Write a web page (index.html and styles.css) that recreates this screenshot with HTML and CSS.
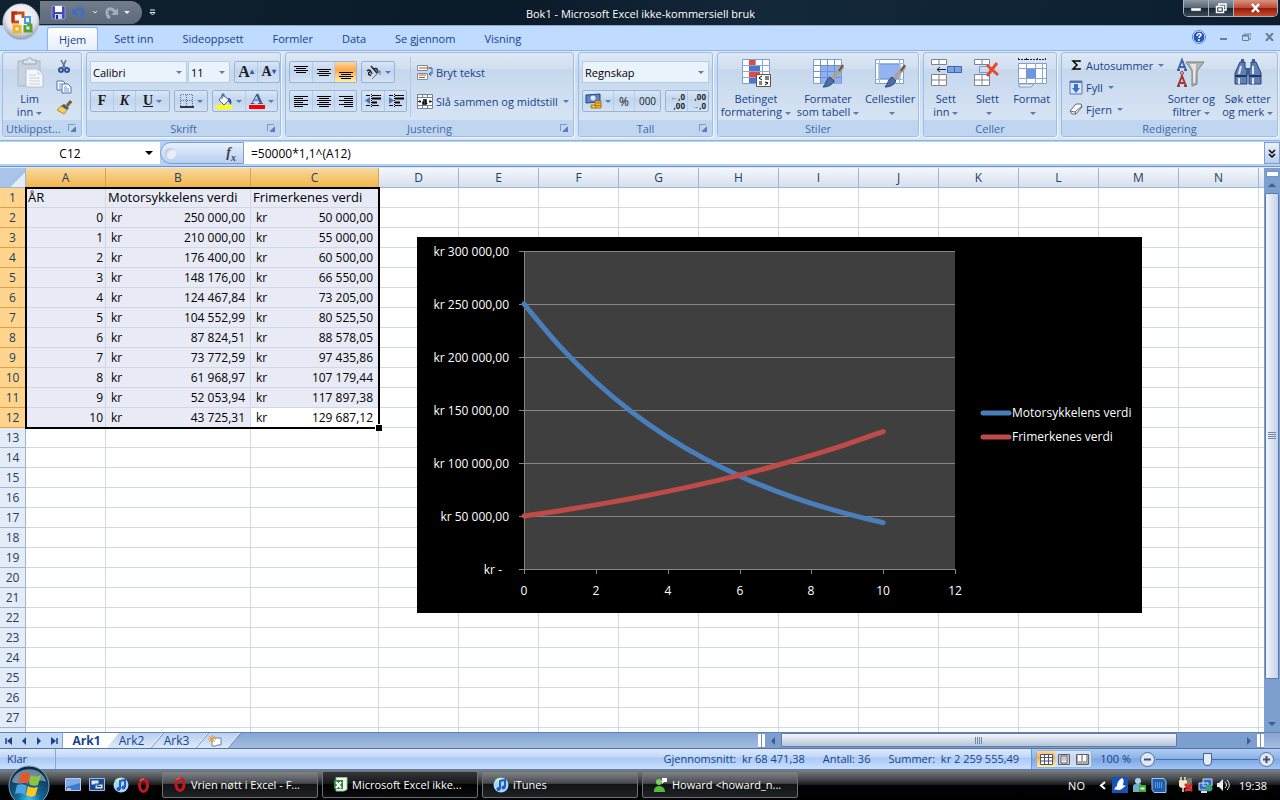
FILE: index.html
```html
<!DOCTYPE html>
<html lang="no">

<head>
    <meta charset="UTF-8">
    <meta name="viewport" content="width=device-width, initial-scale=1.0">
    <title>Bok1 - Microsoft Excel ikke-kommersiell bruk</title>
    <link rel="stylesheet" href="styles.css">
</head>

<body>
    <header class="titlebar">
        <button class="office" aria-label="Office">
            <svg width="38" height="38" viewBox="0 0 38 38">
                <defs>
                    <radialGradient id="orb" cx=".5" cy=".35" r=".65"><stop offset="0" stop-color="#fff"/><stop offset=".65" stop-color="#e3e7ee"/><stop offset="1" stop-color="#8d98ab"/></radialGradient>
                </defs>
                <circle cx="19" cy="19" r="18" fill="url(#orb)" stroke="#c6ccd6"/>
                <g fill="none" stroke-width="3">
                    <path d="M17 19h-6v-9h10v5" stroke="#d9480f"/>
                    <path d="M22 14h6v6h-5v-6" stroke="#4b9be0" stroke-width="2"/>
                    <path d="M18 22v7h-6v-6h6" stroke="#f0b323"/>
                    <path d="M23 22v6h6v-6h-4" stroke="#5aa02c"/>
                    <path d="M11 19v-9h4" stroke="#b5300b"/>
                </g>
            </svg>
        </button>
        <div class="quick">
            <button aria-label="Lagre"><svg width="15" height="15" viewBox="0 0 15 15"><path d="M1 1h12l1 1v12H1z" fill="#4349b5" stroke="#8c92e0"/><path d="M4 1h7v6H4z" fill="#fff"/><path d="M4 9h7v5H4z" fill="#c9d4f0"/><path d="M5 10h2v4H5z" fill="#272c7c"/></svg></button>
            <button aria-label="Angre"><svg width="14" height="13" viewBox="0 0 14 13"><path d="M3 6C6 1 12 2 11 7c0 2-1 4-3 5" fill="none" stroke="#3f6fc4" stroke-width="3"/><path d="M0 2v7h7z" fill="#3f6fc4"/></svg></button>
            <svg width="6" height="5" viewBox="0 0 6 5"><path d="M1 1l2 2 2-2" fill="none" stroke="#e7ecf4"/></svg>
            <button aria-label="Gjenta"><svg width="14" height="13" viewBox="0 0 14 13"><path d="M11 6C8 1 2 2 3 7c0 2 1 4 3 5" fill="none" stroke="#a4adba" stroke-width="3"/><path d="M14 2v7H7z" fill="#a4adba"/></svg></button>
            <svg width="6" height="5" viewBox="0 0 6 5"><path d="M0 1h6L3 4z" fill="#e7ecf4"/></svg>
        </div>
        <button class="customize" aria-label="Tilpass"><svg width="7" height="8" viewBox="0 0 7 8"><path d="M1 1h5M1 3.500h5L3.500 6z" fill="none" stroke="#e7ecf4"/></svg></button>
        <h1>Bok1 - Microsoft Excel ikke-kommersiell bruk</h1>
        <div class="window-buttons">
            <button aria-label="Minimer"><svg width="12" height="10" viewBox="0 0 12 10"><path d="M1 5h10v3H1z" fill="#fff" stroke="#555" stroke-width=".5"/></svg></button>
            <button aria-label="Gjenopprett"><svg width="12" height="11" viewBox="0 0 12 11"><path d="M4 3V1h7v6H9M1.500 3.500h7v6h-7zM4 6h2v1H4z" fill="none" stroke="#fff" stroke-width="1.500"/></svg></button>
            <button class="close" aria-label="Lukk"><svg width="11" height="10" viewBox="0 0 11 10"><path d="M2 1l7 8M9 1L2 9" stroke="#fff" stroke-width="2.500"/></svg></button>
        </div>
    </header>

    <nav class="tabs">
        <button class="act">Hjem</button>
        <button>Sett inn</button>
        <button>Sideoppsett</button>
        <button>Formler</button>
        <button>Data</button>
        <button>Se gjennom</button>
        <button>Visning</button>
        <div class="doc-buttons">
            <button aria-label="Hjelp"><svg width="14" height="14" viewBox="0 0 14 14"><circle cx="7" cy="7" r="6" fill="#2358c4" stroke="#fff"/><circle cx="7" cy="7" r="6.500" fill="none" stroke="#5b84cc"/><path d="M5 6c0-3 4-3 4-1 0 1-2 1-2 3M7 9v2" fill="none" stroke="#fff" stroke-width="1.500"/></svg></button>
            <button aria-label="Minimer vindu"><svg width="8" height="8" viewBox="0 0 8 8"><path d="M0 5h7v2H0z" fill="#6f7c8e"/></svg></button>
            <button aria-label="Gjenopprett vindu"><svg width="9" height="8" viewBox="0 0 9 8"><path d="M2 2V1h7v5H7M.500 2.500h6v5h-6zM0 3h7" fill="none" stroke="#6f7c8e"/></svg></button>
            <button aria-label="Lukk vindu"><svg width="9" height="8" viewBox="0 0 9 8"><path d="M1 0l7 8M8 0L1 8" stroke="#6f7c8e" stroke-width="2"/></svg></button>
        </div>
    </nav>

    <section class="ribbon">
        <div class="group clipboard">
            <div class="tools">
                <button class="big">
                    <svg width="30" height="32" viewBox="0 0 30 32"><path d="M3 4h22v25H3z" fill="#c8d2df" stroke="#a9b7c9"/><path d="M8 3h4c0-3 5-3 5 0h4v4H8z" fill="#dde4ec" stroke="#97a6b9"/><path d="M11 12h12l5 5v13H11z" fill="#f4f7fb" stroke="#b4c1d4"/><path d="M23 12v5h5M14 18h7M14 21h11M14 24h11M14 27h11" fill="none" stroke="#c7d3e4"/></svg>
                    <span>Lim<br>inn<i class="caret"></i></span>
                </button>
                <div class="stack">
                    <button aria-label="Klipp ut"><svg width="14" height="15" viewBox="0 0 14 15"><path d="M4 1l5 9M9 1L5 10" stroke="#5c6f8d" stroke-width="1.500"/><circle cx="4" cy="11" r="2" fill="none" stroke="#2d55a4" stroke-width="2"/><circle cx="10" cy="11" r="2" fill="none" stroke="#2d55a4" stroke-width="2"/></svg></button>
                    <button aria-label="Kopier"><svg width="16" height="14" viewBox="0 0 16 14"><path d="M1 1h6l2 2v7H1z" fill="#fff" stroke="#4d6fb0"/><path d="M6 4h6l3 3v6H6z" fill="#fff" stroke="#4d6fb0"/><path d="M3 4h3M3 6h2M3 8h2M8 7h3M8 9h5M8 11h5" stroke="#6c93d2"/></svg></button>
                    <button aria-label="Kopier format"><svg width="16" height="15" viewBox="0 0 16 15"><path d="M15 1l-4 5" stroke="#7b6138" stroke-width="3"/><path d="M8 4l5 4-2 2-6-4z" fill="#4d5566"/><path d="M5 6l6 4-3 4-7-4z" fill="#efce6c" stroke="#b78d2c"/></svg></button>
                </div>
            </div>
            <footer>Utklippst...<i class="launch"></i></footer>
        </div>

        <div class="group font">
            <div class="tools rows">
                <div class="row">
                    <div class="pair">
                        <select class="family" aria-label="Skrift"><option>Calibri</option></select>
                        <select class="size" aria-label="Skriftstørrelse"><option>11</option></select>
                    </div>
                    <div class="set push">
                        <button class="serif large" aria-label="Forstørr skrift">A<sup>▴</sup></button>
                        <button class="serif" aria-label="Forminsk skrift">A<sup>▾</sup></button>
                    </div>
                </div>
                <div class="row">
                    <div class="set format">
                        <button class="serif">F</button>
                        <button class="serif"><em>K</em></button>
                        <button class="serif wide"><u>U</u><i class="caret"></i></button>
                    </div>
                    <div class="set">
                        <button class="wide" aria-label="Kantlinjer"><svg width="14" height="14" viewBox="0 0 14 14"><path d="M1 .500h12M1 6.500h12M.500 1v12M6.500 1v12M12.500 1v12" stroke="#5d7399" stroke-dasharray="1 1"/><path d="M0 13h14" stroke="#000" stroke-width="1.500"/></svg><i class="caret"></i></button>
                    </div>
                    <div class="set push">
                        <button class="wide" aria-label="Fyllfarge"><svg width="17" height="16" viewBox="0 0 17 16"><path d="M0 12h16v4H0z" fill="#ff0"/><path d="M7 2l6 5-5 5-5-5z" fill="#f4f7fc" stroke="#44608f"/><path d="M6 6V1h2v3" fill="none" stroke="#44608f"/><path d="M12 5c3 0 4 3 3 7l-3-4z" fill="#2b56a8"/></svg><i class="caret"></i></button>
                        <button class="wide" aria-label="Skriftfarge"><svg width="16" height="16" viewBox="0 0 16 16"><path d="M0 12h16v4H0z" fill="red"/><path d="M3 10l5-9M5 7h5M1.500 10.500h4M9 10.500h5" fill="none" stroke="#3d5c93"/><path d="M8 1l4 9" stroke="#3d5c93" stroke-width="2.500"/></svg><i class="caret"></i></button>
                    </div>
                </div>
            </div>
            <footer>Skrift<i class="launch"></i></footer>
        </div>

        <div class="group align">
            <div class="tools">
                <div class="rows">
                    <div class="row">
                        <div class="set">
                            <button aria-label="Toppjuster"><svg width="14" height="14" viewBox="0 0 14 14"><path d="M0 1.500h14M2 3.500h10M0 5.500h14M2 7.500h10" stroke="#000"/></svg></button>
                            <button aria-label="Midtjuster"><svg width="14" height="14" viewBox="0 0 14 14"><path d="M0 4.500h14M2 6.500h10M0 8.500h14M2 10.500h10" stroke="#000"/></svg></button>
                            <button class="on" aria-label="Bunnjuster"><svg width="14" height="14" viewBox="0 0 14 14"><path d="M0 7.500h14M2 9.500h10M0 11.500h14M2 13.500h10" stroke="#000"/></svg></button>
                        </div>
                        <div class="set">
                            <button class="wide" aria-label="Retning"><svg width="16" height="15" viewBox="0 0 16 15"><path d="M1 6c2-2 3-1 4 1l1 2M4 7c-2 0-2 4 1 3M5 1l6 7M8 4c3-2 5 2 2 4" fill="none" stroke="#222" stroke-width="1.500"/><path d="M6 14l8-8M14 10V6h-4" fill="none" stroke="#5c6f8d"/></svg><i class="caret"></i></button>
                        </div>
                    </div>
                    <div class="row">
                        <div class="set">
                            <button aria-label="Venstrejuster"><svg width="14" height="13" viewBox="0 0 14 13"><path d="M0 1.500h14M0 3.500h9M0 5.500h14M0 7.500h9M0 9.500h14M0 11.500h9" stroke="#000"/></svg></button>
                            <button aria-label="Midtstill"><svg width="14" height="13" viewBox="0 0 14 13"><path d="M0 1.500h14M2 3.500h10M0 5.500h14M2 7.500h10M0 9.500h14M2 11.500h10" stroke="#000"/></svg></button>
                            <button aria-label="Høyrejuster"><svg width="14" height="13" viewBox="0 0 14 13"><path d="M0 1.500h14M5 3.500h9M0 5.500h14M5 7.500h9M0 9.500h14M5 11.500h9" stroke="#000"/></svg></button>
                        </div>
                        <div class="set">
                            <button aria-label="Reduser innrykk"><svg width="16" height="14" viewBox="0 0 16 14"><path d="M1 1.500h4M7 1.500h9M1 11.500h4M7 11.500h7" stroke="#000"/><path d="M7 4.500h9M7 8.500h5" stroke="#000" stroke-width="2"/><path d="M6.500 0v14" stroke="#000" stroke-dasharray="1 1"/><path d="M5 3v7L0 6.500z" fill="#4a70b5"/></svg></button>
                            <button aria-label="Øk innrykk"><svg width="16" height="14" viewBox="0 0 16 14"><path d="M1 1.500h4M7 1.500h9M1 11.500h4M7 11.500h7" stroke="#000"/><path d="M7 4.500h9M7 8.500h5" stroke="#000" stroke-width="2"/><path d="M6.500 0v14" stroke="#000" stroke-dasharray="1 1"/><path d="M1 3v7l5-3.500z" fill="#4a70b5"/></svg></button>
                        </div>
                    </div>
                </div>
                <div class="rows wrap">
                    <button class="text"><svg width="16" height="15" viewBox="0 0 16 15"><path d="M.500.500h10v5H.500zM.500 8.500h10v6H.500z" fill="#fff" stroke="#7d8ba3"/><path d="M2 3h12M2 10h7M2 12.500h6" stroke="#c05a1f"/><path d="M12 3h3v6h-3M14 7l-2 2 2 2" fill="none" stroke="#3b62a8"/></svg>Bryt tekst</button>
                    <button class="text"><svg width="16" height="15" viewBox="0 0 16 15"><path d="M.500.500h15v14H.500zM5.500 0v4M10.500 0v4M5.500 11v4M10.500 11v4M0 3.500h16M0 11.500h16" fill="#fff" stroke="#6d7f9c"/><path d="M1 7.500h3M12 7.500h3M3 6v3M13 6v3" stroke="#222"/><path d="M6 6h3v4H6V8h3M9 9l1 1" fill="none" stroke="#000" stroke-width="1.500"/></svg>Slå sammen og midtstill<i class="caret"></i></button>
                </div>
            </div>
            <footer>Justering<i class="launch"></i></footer>
        </div>

        <div class="group number">
            <div class="tools rows">
                <select aria-label="Tallformat"><option>Regnskap</option></select>
                <div class="row">
                    <div class="set">
                        <button class="wide" aria-label="Valuta"><svg width="17" height="16" viewBox="0 0 17 16"><path d="M1 2l14-1v8L1 10z" fill="#5b84c8" stroke="#27467e"/><circle cx="8" cy="5" r="2.500" fill="#dfe9f8"/><path d="M10 8h6v7h-6z" fill="#f1bd3b" stroke="#a97812"/><path d="M6 12h5v3H6zM10 10h6M10 12.500h6" fill="#f1bd3b" stroke="#a97812"/></svg><i class="caret"></i></button>
                        <button class="percent">%</button>
                        <button class="zeros">000</button>
                    </div>
                    <div class="set push decimals">
                        <button><span>←<b>,0</b></span><b>,00</b></button>
                        <button><b>,00</b><span>→<b>,0</b></span></button>
                    </div>
                </div>
            </div>
            <footer>Tall<i class="launch"></i></footer>
        </div>

        <div class="group styles">
            <div class="tools">
                <button class="big">
                    <svg width="30" height="30" viewBox="0 0 30 30"><path d="M1.500 1.500h27v24h-27z" fill="#fff" stroke="#7f9dcd"/><path d="M1 7.500h28M1 13.500h28M1 19.500h28M8.500 1v25M14.500 1v25M21.500 1v25" stroke="#8ba8d5"/><path d="M8 2h6v5H8zM8 14h11v5H8z" fill="#e8473f"/><path d="M8 8h11v5H8zM8 20h8v5H8z" fill="#4a76cf"/><path d="M15.500 16.500h14v12h-14z" fill="#fff" stroke="#555"/><path d="M21 18l-3 2 3 2M18 24h3M18 26h3M24 19h4M24 21h4M24 24l3 1-3 2" fill="none" stroke="#000"/></svg>
                    <span>Betinget<br>formatering<i class="caret"></i></span>
                </button>
                <button class="big">
                    <svg width="32" height="30" viewBox="0 0 32 30"><path d="M1.500 1.500h28v24h-28z" fill="#fff" stroke="#7f9dcd"/><path d="M9 8h20v18H9z" fill="#8fb0ec"/><path d="M1 7.500h29M1 13.500h29M1 19.500h29M8.500 1v25M15.500 1v25M22.500 1v25" stroke="#6d91ce"/><path d="M31 8L20 21" stroke="#a9a39b" stroke-width="4"/><path d="M31 7l-4 6" stroke="#725134" stroke-width="2"/><path d="M18 19l4 4c-2 4-6 6-11 6 3-3 3-8 7-10z" fill="#4a6fa8" stroke="#2c4a7d"/></svg>
                    <span>Formater<br>som tabell<i class="caret"></i></span>
                </button>
                <button class="big">
                    <svg width="32" height="30" viewBox="0 0 32 30"><path d="M1.500 1.500h28v24h-28z" fill="#fff" stroke="#7f9dcd"/><path d="M5 6h21v15H5z" fill="#94b3f0" stroke="#6d91ce"/><path d="M1 5.500h29M1 21.500h29M5.500 1v25M25.500 1v25" stroke="#9db7e2"/><path d="M31 8L20 21" stroke="#a9a39b" stroke-width="4"/><path d="M31 7l-4 6" stroke="#725134" stroke-width="2"/><path d="M18 19l4 4c-2 4-6 6-11 6 3-3 3-8 7-10z" fill="#4a6fa8" stroke="#2c4a7d"/></svg>
                    <span>Cellestiler<br><i class="caret"></i></span>
                </button>
            </div>
            <footer>Stiler</footer>
        </div>

        <div class="group cells">
            <div class="tools">
                <button class="big">
                    <svg width="32" height="30" viewBox="0 0 32 30"><path d="M1.500 1.500h15v5h-15zM9 1v5M1.500 16.500h15v11h-15zM9 16v12M1 22h16" fill="#fff" stroke="#7a8494"/><path d="M17.500 8.500h14v6h-14z" fill="#7ba0e6" stroke="#3d66b3"/><path d="M24.500 8v7" stroke="#3d66b3"/><path d="M7 11.500h9M10 9l-3 2.500 3 2.500" fill="none" stroke="#222"/></svg>
                    <span>Sett<br>inn<i class="caret"></i></span>
                </button>
                <button class="big">
                    <svg width="28" height="30" viewBox="0 0 28 30"><path d="M1.500 1.500h15v5h-15zM9 1v5M1.500 16.500h15v11h-15zM9 16v12M1 22h16" fill="#fff" stroke="#7a8494"/><path d="M6.500 8.500h10v6h-10z" fill="none" stroke="#335fae" stroke-dasharray="1 1"/><path d="M14 7l11 10M24 5L14 18" stroke="#e84a2e" stroke-width="3"/></svg>
                    <span>Slett<br><i class="caret"></i></span>
                </button>
                <button class="big">
                    <svg width="30" height="30" viewBox="0 0 30 30"><path d="M1 1.500h28M1.500 0v3M9.500 0v3M20.500 0v3M28.500 0v3" stroke="#222" stroke-dasharray="2 1"/><path d="M1.500 5.500h28v20h-28z" fill="#fff" stroke="#7f9dcd"/><path d="M2 26h15l-3 3H2z" fill="#eef2fa" stroke="#7f9dcd"/><path d="M1 10.500h28M1 20.500h28M9.500 5v21M18.500 5v21M25.500 5v21" stroke="#8ba8d5"/><path d="M9 11h10v9H9z" fill="#6f96e0"/></svg>
                    <span>Format<br><i class="caret"></i></span>
                </button>
            </div>
            <footer>Celler</footer>
        </div>

        <div class="group editing">
            <div class="tools">
                <div class="list">
                    <button class="text"><svg width="14" height="14" viewBox="0 0 14 14"><path d="M11 4V3H4l4 4-4 4h7v-1" fill="none" stroke="#000" stroke-width="1.500"/></svg>Autosummer<i class="caret"></i></button>
                    <button class="text"><svg width="14" height="15" viewBox="0 0 14 15"><path d="M1 1h12v13H1z" fill="#dce8fa" stroke="#5277b4"/><path d="M1 2h12" stroke="#5277b4" stroke-width="2"/><path d="M5 4h4v4h2l-4 5-4-5h2z" fill="#3b6fd1"/></svg>Fyll<i class="caret"></i></button>
                    <button class="text"><svg width="14" height="13" viewBox="0 0 14 13"><path d="M1 8l6-7h5l1 3-6 7H3z" fill="#fff" stroke="#5d6a7c"/><path d="M1 8l5 1 7-6M6 9l1 2" fill="none" stroke="#5d6a7c"/></svg>Fjern<i class="caret"></i></button>
                </div>
                <button class="big">
                    <svg width="30" height="30" viewBox="0 0 30 30"><path d="M10 4h18l-7 9v13l-5 2V13z" fill="#b4b5b4" stroke="#7c7d7d"/><path d="M14 6h6l-1 18-2 1V12z" fill="#e5e5e2"/><path d="M2 12L6 2l4 10M4 9h5M1 12h3M8 12h3" fill="none" stroke="#3d66a8" stroke-width="2"/><path d="M2 28l4-10 4 10M4 25h5M1 28h3M8 28h3" fill="none" stroke="#a33a35" stroke-width="2"/><circle cx="6" cy="15" r="1.500" fill="none" stroke="#a33a35"/></svg>
                    <span>Sorter og<br>filtrer<i class="caret"></i></span>
                </button>
                <button class="big">
                    <svg width="28" height="30" viewBox="0 0 28 30"><path d="M6 4h5v5l2 4v13H1V15zM17 4h5l5 11v11H15V13l2-4z" fill="#5f80b4" stroke="#2a4370"/><path d="M7 1h3v4H7zM18 1h3v4h-3zM12 10h4v7h-4z" fill="#3f5c8e"/><path d="M1 18h12M15 18h12" stroke="#22365c" stroke-width="2"/><path d="M5 20v6M19 20v6M7 8l-2 8M19 8v8" stroke="#dbe6f6" stroke-width="2"/></svg>
                    <span>Søk etter<br>og merk<i class="caret"></i></span>
                </button>
            </div>
            <footer>Redigering</footer>
        </div>
    </section>

    <section class="formula-bar">
        <div class="name-box">
            <input type="text" value="C12" aria-label="Navneboks">
            <button aria-label="Vis navn"><i class="caret"></i></button>
        </div>
        <div class="fx"><span class="knob"></span><button aria-label="Sett inn funksjon"><em>f<sub>x</sub></em></button></div>
        <input class="formula" type="text" value="=50000*1,1^(A12)" aria-label="Formellinje">
        <button class="expand" aria-label="Utvid formellinje"><svg width="8" height="9" viewBox="0 0 8 9"><path d="M1 1l3 3 3-3M1 5l3 3 3-3" fill="none" stroke="#000" stroke-width="1.500"/></svg></button>
    </section>

    <main class="workspace">
        <div class="sheet">
            <table>
                <colgroup class="cols"></colgroup>
                <thead></thead>
                <tbody></tbody>
            </table>
            <div class="selection"></div>
            <div class="chart">
                <svg width="725" height="376" viewBox="0 0 725 376">
                    <rect x="107" y="14" width="431" height="318" fill="#3f3f3f"/>
                    <g class="axes"></g>
                    <g class="series"></g>
                    <path class="blue" d="M566 176h26"/>
                    <text x="595" y="180">Motorsykkelens verdi</text>
                    <path class="red" d="M566 200h26"/>
                    <text x="595" y="204">Frimerkenes verdi</text>
                </svg>
            </div>
        </div>
        <div class="vscroll">
            <span class="split"></span>
            <button class="up" aria-label="Rull opp"></button>
            <div class="track"><div class="thumb"><i></i></div></div>
            <button class="down" aria-label="Rull ned"></button>
        </div>
    </main>

    <section class="sheet-bar">
        <div class="sheet-nav">
            <button aria-label="Første ark"><svg width="8" height="8" viewBox="0 0 8 8"><path d="M1 1v6" stroke="#17428e" stroke-width="1.500"/><path d="M7 0v8L2 4z" fill="#17428e"/></svg></button>
            <button aria-label="Forrige ark"><svg width="8" height="8" viewBox="0 0 8 8"><path d="M6 0v8L2 4z" fill="#17428e"/></svg></button>
            <button aria-label="Neste ark"><svg width="8" height="8" viewBox="0 0 8 8"><path d="M2 0v8l4-4z" fill="#17428e"/></svg></button>
            <button aria-label="Siste ark"><svg width="8" height="8" viewBox="0 0 8 8"><path d="M7 1v6" stroke="#17428e" stroke-width="1.500"/><path d="M1 0v8l5-4z" fill="#17428e"/></svg></button>
        </div>
        <div class="sheet-tabs">
            <button class="act">Ark1</button>
            <button>Ark2</button>
            <button>Ark3</button>
            <button class="new" aria-label="Nytt ark"><svg width="15" height="12" viewBox="0 0 15 12"><path d="M4 3h9v7H9l-1 1H4z" fill="#fff" stroke="#6c7fa5"/><path d="M4 0v8M0 4h8M1 1l6 6M7 1L1 7" stroke="#e89a2b"/></svg></button>
        </div>
        <span class="split"></span>
        <div class="hscroll">
            <button class="left" aria-label="Rull til venstre"></button>
            <div class="track"><div class="thumb"><i></i></div></div>
            <button class="right" aria-label="Rull til høyre"></button>
        </div>
        <span class="split"></span>
    </section>

    <section class="status">
        <span class="ready">Klar</span>
        <div class="sums">
            <span>Gjennomsnitt:&nbsp; kr 68 471,38</span>
            <span>Antall: 36</span>
            <span>Summer:&nbsp; kr 2 259 555,49</span>
        </div>
        <div class="view">
            <div class="set">
                <button class="on" aria-label="Normal"><svg width="13" height="11" viewBox="0 0 13 11"><path d="M.500.500h12v10H.500z" fill="#fff" stroke="#4b556a"/><path d="M0 3.500h13M0 7h13M4.500 0v11M8.500 0v11" stroke="#4b556a"/></svg></button>
                <button aria-label="Sideoppsett"><svg width="12" height="11" viewBox="0 0 12 11"><path d="M.500.500h11v10H.500z" fill="#ccc" stroke="#5a616e"/><path d="M3 2h6v7H3z" fill="#fff" stroke="#5a616e"/><path d="M4 4h4M4 6h4" stroke="#999"/></svg></button>
                <button aria-label="Sideskift"><svg width="13" height="11" viewBox="0 0 13 11"><path d="M.500.500h12v10H.500z" fill="#aaa" stroke="#5a616e"/><path d="M2 1h3v6H2zM7 1h3v6H7z" fill="#fff"/></svg></button>
            </div>
            <span>100 %</span>
            <button class="zoom" aria-label="Zoom ut"><svg width="17" height="17" viewBox="0 0 17 17"><circle cx="8.500" cy="8.500" r="7" fill="#dfe8f6" stroke="#5a6d90"/><path d="M5 8.500h7" stroke="#44526d" stroke-width="2"/></svg></button>
            <input type="range" min="0" max="100" value="50" aria-label="Zoom">
            <button class="zoom" aria-label="Zoom inn"><svg width="17" height="17" viewBox="0 0 17 17"><circle cx="8.500" cy="8.500" r="7" fill="#dfe8f6" stroke="#5a6d90"/><path d="M5 8.500h7M8.500 5v7" stroke="#44526d" stroke-width="2"/></svg></button>
        </div>
    </section>

    <footer class="taskbar">
        <button class="start" aria-label="Start">
            <svg width="42" height="42" viewBox="0 0 42 42">
                <defs>
                    <radialGradient id="start" cx=".5" cy=".85" r=".8"><stop offset="0" stop-color="#38c6f4"/><stop offset=".4" stop-color="#15618f"/><stop offset="1" stop-color="#0b2d49"/></radialGradient>
                </defs>
                <circle cx="21" cy="21" r="20" fill="url(#start)" stroke="#7fa3b8"/>
                <path d="M4 17C7 0 35 0 38 17c-11-5-23 5-34 0z" fill="#fff" opacity=".4"/>
                <path d="M13 9c3-2 6-2 9 0l-2 10c-3-2-6-2-10-1z" fill="#e9552b"/>
                <path d="M23 10c3 2 6 2 10 0l-3 10c-3 1-6 1-9-1z" fill="#8cc63f"/>
                <path d="M9 20c4-1 7-1 10 1l-2 9c-4-2-7-2-10-1z" fill="#4ba3e3"/>
                <path d="M20 21c3 2 6 2 10 1l-3 9c-4 1-6 1-9-1z" fill="#fbc91f"/>
            </svg>
        </button>
        <div class="launch-bar">
            <button aria-label="Vis skrivebord"><svg width="16" height="14" viewBox="0 0 16 14"><path d="M.500.500h15v12H.500z" fill="#3f79cf" stroke="#b7cbe4"/><path d="M1 1h14v4L1 9z" fill="#7eacea"/><path d="M2 11h4" stroke="#fff"/></svg></button>
            <button aria-label="Bytt vindu"><svg width="16" height="14" viewBox="0 0 16 14"><path d="M.500.500h15v12H.500z" fill="#1c4a92" stroke="#9fbbe0"/><path d="M2 2h8v5H2zM6 6h8v5H6z" fill="#dbe8f8" stroke="#1c4a92"/><path d="M8 8.500h4" stroke="#1c4a92"/></svg></button>
            <button aria-label="iTunes"><svg width="16" height="16" viewBox="0 0 16 16"><circle cx="8" cy="8" r="7.500" fill="#a9d6f5"/><path d="M8 8L2 3a8 8 0 016-2z" fill="#c8efb5"/><path d="M7 12V4l5-1v7" fill="none" stroke="#1c5fc4" stroke-width="2"/><circle cx="5.500" cy="12" r="2" fill="#1c5fc4"/><circle cx="10.500" cy="10.500" r="2" fill="#1c5fc4"/></svg></button>
            <button aria-label="Opera"><svg width="13" height="15" viewBox="0 0 13 15"><ellipse cx="6.500" cy="7.500" rx="4" ry="6" fill="none" stroke="#c9161c" stroke-width="3"/><path d="M3 3c1-2 3-2 4-2" fill="none" stroke="#f58e8e"/></svg></button>
        </div>
        <div class="tasks">
            <button><svg width="14" height="15" viewBox="0 0 13 15"><ellipse cx="6.500" cy="7.500" rx="4" ry="6" fill="none" stroke="#c9161c" stroke-width="3"/><path d="M3 3c1-2 3-2 4-2" fill="none" stroke="#f58e8e"/></svg>Vrien nøtt i Excel - F...</button>
            <button class="act"><svg width="15" height="15" viewBox="0 0 15 15"><path d="M3 .500h11v12L11 14H3z" fill="#f2f7ee" stroke="#9fb794"/><path d="M1 3h9v9H1z" fill="#2c8a37"/><path d="M3 5l5 6M8 5l-5 6" stroke="#fff" stroke-width="2"/></svg>Microsoft Excel ikke...</button>
            <button><svg width="16" height="16" viewBox="0 0 16 16"><circle cx="8" cy="8" r="7.500" fill="#a9d6f5"/><path d="M8 8L2 3a8 8 0 016-2z" fill="#c8efb5"/><path d="M7 12V4l5-1v7" fill="none" stroke="#1c5fc4" stroke-width="2"/><circle cx="5.500" cy="12" r="2" fill="#1c5fc4"/><circle cx="10.500" cy="10.500" r="2" fill="#1c5fc4"/></svg>iTunes</button>
            <button><svg width="15" height="16" viewBox="0 0 15 16"><circle cx="6" cy="5" r="3" fill="#7bd05e"/><path d="M1 15c-1-8 11-8 11 0z" fill="#56b83c"/><path d="M9 1h5v4h-3l-2 2z" fill="#fff"/></svg>Howard &lt;howard_n...</button>
        </div>
        <div class="tray">
            <span class="lang">NO</span>
            <button aria-label="Vis skjulte ikoner"><svg width="7" height="9" viewBox="0 0 7 9"><path d="M6 1L2 4.500 6 8" fill="none" stroke="#fff" stroke-width="2"/></svg></button>
            <svg width="16" height="16" viewBox="0 0 16 16"><path d="M0 0h16v16H0z" fill="#1752b5"/><path d="M10 1c3 2 1 5 1 7l3 1c-3 1-4 4-7 4-2 0-3-1-5 0 1-2 1-3 3-4 0-4 2-6 5-8z" fill="#fff"/></svg>
            <svg width="15" height="16" viewBox="0 0 15 16"><circle cx="6" cy="4" r="3" fill="#a9d3ea"/><path d="M1 15V9c0-3 9-3 9 0v6z" fill="#74aacb"/><path d="M7 8h7v7H7z" fill="#35b22b"/><path d="M8.500 11.500h4" stroke="#fff" stroke-width="2"/></svg>
            <svg width="16" height="15" viewBox="0 0 16 15"><path d="M1 .500h12l2 3v11H3l-2-3z" fill="#1d5fae" stroke="#a3c5e8"/><path d="M4 5h7M4 7h7M4 9h7" stroke="#9ed0ff" stroke-dasharray="1 1"/></svg>
            <svg class="gap" width="15" height="16" viewBox="0 0 15 16"><path d="M2 0v4M6 0v4M0 4h8v4l-2 2H2L0 8zM4 10v5" fill="#f0e8c8" stroke="#f0e8c8" stroke-width="1.500"/><path d="M8 1h5v13H8z" fill="#777"/><path d="M6 7l7 7M13 7l-7 7" stroke="#e32020" stroke-width="2.500"/></svg>
            <svg width="15" height="15" viewBox="0 0 15 15"><path d="M5 1h9v7H5zM1 5h9v7H1z" fill="#2e6cc9" stroke="#d4e3f5"/><path d="M3 14h6" stroke="#d4e3f5" stroke-width="2"/><circle cx="11" cy="10" r="3.500" fill="#3a9e76"/></svg>
            <svg width="14" height="14" viewBox="0 0 14 14"><path d="M0 5h2l4-4v12L2 9H0z" fill="#eee"/><path d="M8 4c2 2 2 4 0 6M10 2c3 3 3 7 0 10" fill="none" stroke="#eee"/></svg>
            <time>19:38</time>
        </div>
    </footer>

    <script>
        var rows = [
            ["0", "250 000,00", "50 000,00"],
            ["1", "210 000,00", "55 000,00"],
            ["2", "176 400,00", "60 500,00"],
            ["3", "148 176,00", "66 550,00"],
            ["4", "124 467,84", "73 205,00"],
            ["5", "104 552,99", "80 525,50"],
            ["6", "87 824,51", "88 578,05"],
            ["7", "73 772,59", "97 435,86"],
            ["8", "61 968,97", "107 179,44"],
            ["9", "52 053,94", "117 897,38"],
            ["10", "43 725,31", "129 687,12"]
        ];
        // siste kolonne og rad er bare så vidt synlige
        var letters = "ABCDEFGHIJKLMN".split("").concat("");

        initTable();
        initChart();

        // regnearket
        function initTable() {
            var cols = `<col class="c-num"><col class="c-a"><col class="c-b"><col class="c-c">`;
            var head = `<tr><th class="corner"></th>`;
            for (var i = 0; i < letters.length; i++) {
                if (i > 2) {
                    cols += `<col class="c-x">`;
                }
                head += `<th class="${i < 3 ? "sel" : ""}">${letters[i]}</th>`;
            }
            document.querySelector(".cols").innerHTML = cols;
            document.querySelector("thead").innerHTML = head + "</tr>";

            var body = "";
            for (var r = 1; r <= 28; r++) {
                body += `<tr><th class="${r <= 12 ? "sel" : ""}">${r < 28 ? r : ""}</th>`;
                if (r == 1) {
                    body += `<td class="in title">ÅR</td><td class="in title">Motorsykkelens verdi</td><td class="in title">Frimerkenes verdi</td>`;
                } else if (r <= 12) {
                    var row = rows[r - 2];
                    body += `<td class="in num">${row[0]}</td>`;
                    body += `<td class="in"><div class="money"><span>kr</span><span>${row[1]}</span></div></td>`;
                    body += `<td class="${r == 12 ? "" : "in"}"><div class="money"><span>kr</span><span>${row[2]}</span></div></td>`;
                } else {
                    body += "<td></td><td></td><td></td>";
                }
                for (var c = 3; c < letters.length; c++) {
                    body += "<td></td>";
                }
                body += "</tr>";
            }
            document.querySelector("tbody").innerHTML = body;
        }

        // diagrammet
        function initChart() {
            var left = 107, bottom = 332, stepX = 431 / 12, stepY = 53;
            var axes = "";
            for (var i = 0; i <= 6; i++) {
                var y = bottom - i * stepY;
                var label = i == 0 ? "kr -" : `kr ${i * 50} 000,00`;
                axes += `<path d="M${left - 5} ${y + 0.5}H538"/><text class="end" x="${i == 0 ? 85 : 92}" y="${y + 5}">${label}</text>`;
            }
            for (var j = 0; j <= 12; j += 2) {
                var x = Math.round(left + j * stepX);
                axes += `<path d="M${x + 0.5} ${bottom}v5"/><text class="mid" x="${x}" y="358">${j}</text>`;
            }
            axes += `<path d="M${left + 0.5} 14V${bottom}"/>`;
            document.querySelector(".axes").innerHTML = axes;

            var html = "";
            for (var s = 1; s <= 2; s++) {
                var points = rows.map(function (row, k) {
                    var value = parseFloat(row[s].replace(" ", "").replace(",", "."));
                    return [left + k * stepX, bottom - value / 50000 * stepY];
                });
                html += `<path class="${s == 1 ? "blue" : "red"}" d="${smooth(points)}"/>`;
            }
            document.querySelector(".series").innerHTML = html;
        }

        // glatt kurve gjennom punktene
        function smooth(p) {
            var d = `M${p[0]}`;
            for (var i = 0; i < p.length - 1; i++) {
                var a = p[i - 1] || p[i], b = p[i], c = p[i + 1], e = p[i + 2] || c;
                d += `C${b[0] + (c[0] - a[0]) / 6},${b[1] + (c[1] - a[1]) / 6} ${c[0] - (e[0] - b[0]) / 6},${c[1] - (e[1] - b[1]) / 6} ${c}`;
            }
            return d;
        }
    </script>
</body>

</html>
```
FILE: styles.css
```css
* {
    margin: 0;
    padding: 0;
    box-sizing: border-box;
}

body {
    display: flex;
    flex-direction: column;
    height: 100vh;
    overflow: hidden;
    font-family: "Open Sans", "Noto Sans", sans-serif;
    font-size: 11px;
    color: #15428b;
    background-color: #bfdbff;
}

button,
input,
select {
    font: inherit;
    color: inherit;
    background: none;
    border: 0;
    border-radius: 0;
    outline: none;
}

button {
    display: flex;
    align-items: center;
    justify-content: center;
}

svg {
    display: block;
    flex: none;
}

.caret {
    display: inline-block;
    margin-left: 3px;
    border: 3px solid transparent;
    border-top-color: #567db1;
    border-bottom: 0;
    vertical-align: middle;
}

/* title bar */
.titlebar {
    position: relative;
    display: flex;
    height: 26px;
    padding: 0 2px 0 40px;
    color: #fff;
    background: linear-gradient(100deg, #12212f, #0b1a29 40%, #14283b 60%, #0b1d2f);
    border-bottom: 1px solid #8fa9bd;
}

.office {
    position: absolute;
    left: 2px;
    top: 3px;
    z-index: 2;
}

.quick {
    display: flex;
    align-items: center;
    gap: 6px;
    width: 102px;
    height: 23px;
    margin-top: 1px;
    padding-left: 11px;
    background: linear-gradient(#727d8b, #5d6a79);
    border-radius: 0 12px 12px 0;
}

.customize {
    width: 20px;
}

.titlebar h1 {
    flex: 1;
    padding-right: 64px;
    font-size: 11px;
    font-weight: normal;
    line-height: 27px;
    text-align: center;
    white-space: nowrap;
}

.window-buttons {
    display: flex;
    height: 17px;
    margin-left: auto;
    border: 1px solid #a8b3bd;
    border-top: 0;
    border-radius: 0 0 5px 5px;
    overflow: hidden;
}

.window-buttons button {
    width: 25px;
    background: linear-gradient(#8d98a3, #56626e 50%, #16222e 50%, #3b4a59);
    border-right: 1px solid #a8b3bd;
}

.window-buttons .close {
    width: 43px;
    background: linear-gradient(#d99384, #bb4a35 50%, #8f1a0a 50%, #c94a28);
    border-right: 0;
}

/* ribbon tabs */
.tabs {
    display: flex;
    align-items: flex-end;
    height: 24px;
    padding-left: 47px;
    background-color: #bfdbff;
}

.tabs > button {
    height: 23px;
    margin-right: 7px;
    padding: 0 11px;
}

.tabs .act {
    margin-right: 5px;
    background: linear-gradient(#fff, #e5eefa);
    border: 1px solid #8db2e3;
    border-bottom: 0;
    border-radius: 3px 3px 0 0;
}

.doc-buttons {
    display: flex;
    align-items: center;
    gap: 14px;
    height: 23px;
    margin-left: auto;
    padding: 0 6px 3px 0;
}

/* ribbon */
.ribbon {
    display: flex;
    gap: 4px;
    height: 91px;
    padding: 1px 2px 3px;
    background: linear-gradient(#dfeafa, #c7d9ef 20%, #d7e5f6);
    border: 1px solid #8db2e3;
    border-width: 1px 0;
}

.group {
    display: flex;
    flex-direction: column;
    flex: none;
    border: 1px solid #9ebce4;
    border-radius: 3px;
    background: linear-gradient(#dee8f5, #d1dff0 18%, #c7d8ed 20%, #dbe7f5);
    box-shadow: 1px 1px 0 #eef5fd;
    overflow: hidden;
}

.group > footer {
    display: flex;
    align-items: center;
    justify-content: center;
    position: relative;
    height: 16px;
    color: #3e6aaa;
    background-color: #c0d6f0;
}

.launch {
    position: absolute;
    right: 5px;
    top: 4px;
    width: 8px;
    height: 8px;
    border: 1px solid #7b9ccb;
    border-right-color: #dfeafa;
    border-bottom-color: #dfeafa;
}

.launch::after {
    content: "";
    position: absolute;
    right: -1px;
    bottom: -1px;
    border: 3px solid #5a7fb8;
    border-top-color: transparent;
    border-left-color: transparent;
}

.tools {
    display: flex;
    flex: 1;
}

.clipboard {
    width: 80px;
}

.clipboard > footer {
    justify-content: flex-start;
    padding-left: 3px;
}

.font {
    width: 195px;
}

.align {
    width: 289px;
}

.number {
    width: 135px;
}

.styles {
    width: 202px;
}

.cells {
    width: 134px;
}

.editing {
    flex: 1;
}

.big {
    flex: 1 1 auto;
    flex-direction: column;
    justify-content: flex-start;
    padding-top: 4px;
    line-height: 13px;
    white-space: nowrap;
}

.big span {
    margin-top: 3px;
}

.big svg {
    height: 32px;
}

.stack {
    display: flex;
    flex-direction: column;
    justify-content: space-around;
    padding: 3px 9px 2px 0;
}

.rows {
    display: flex;
    flex-direction: column;
    gap: 7px;
    padding: 8px 3px 0;
}

.row {
    display: flex;
    gap: 4px;
}

.push {
    margin-left: auto;
}

.pair {
    display: flex;
    gap: 1px;
}

select {
    appearance: none;
    height: 22px;
    padding-left: 2px;
    color: #000;
    background: #eaf2fb url("data:image/svg+xml,%3Csvg xmlns='http://www.w3.org/2000/svg' width='6' height='3'%3E%3Cpath d='M0 0h6L3 3z' fill='%23567db1'/%3E%3C/svg%3E") no-repeat right 4px center;
    border: 1px solid #b5cbe8;
}

.family {
    width: 97px;
}

.size {
    width: 42px;
}

.number select {
    width: 127px;
}

.set {
    display: flex;
    height: 22px;
    background: linear-gradient(#d9e6f6, #c3d6ee 45%, #d3e2f4);
    border: 1px solid #97b3d8;
    border-radius: 2px;
}

.set button {
    width: 22px;
    border-left: 1px solid #b5cae6;
}

.set button:first-child {
    border-left: 0;
}

.set .wide {
    width: 32px;
}

.set .on {
    background: linear-gradient(#fbd7a1, #fca84c 40%, #fdf0a8);
}

.serif {
    font-family: "Liberation Serif", serif;
    font-size: 14px;
    font-weight: bold;
    color: #1c1c1c;
}

.serif.large {
    font-size: 16px;
}

.serif sup {
    font-size: 8px;
    line-height: 0;
    vertical-align: 6px;
    color: #2f569c;
}

.format {
    font-size: 14px;
}

.format .wide {
    width: 34px;
}

.number .set {
    color: #222;
}

.number .wide {
    width: 30px;
}

.number .percent {
    width: 21px;
    font-size: 12px;
}

.number .zeros {
    width: 26px;
    font-size: 10px;
}

.decimals button {
    flex-direction: column;
    align-items: flex-end;
    width: 21px;
    padding-right: 2px;
    font-size: 8px;
    line-height: 9px;
}

.decimals span {
    color: #2f569c;
}

.decimals b {
    color: #222;
}

.wrap {
    margin: 4px 0 3px;
    padding: 4px 0 0 6px;
    border-left: 1px solid #b3c8e4;
}

.text {
    gap: 3px;
    justify-content: flex-start;
    height: 22px;
    white-space: nowrap;
}

.text .caret {
    margin-left: 2px;
}

.list {
    width: 102px;
    padding: 1px 0 0 7px;
}

/* formula bar */
.formula-bar {
    display: flex;
    height: 26px;
    padding: 1px 0 2px;
    font-size: 12px;
    color: #000;
    background-color: #b5d0f2;
    border-bottom: 1px solid #6f93c5;
}

.name-box {
    display: flex;
    width: 160px;
    background-color: #fff;
}

.name-box input {
    width: 140px;
    text-align: center;
}

.name-box button {
    width: 16px;
}

.name-box .caret {
    margin-left: 2px;
    border-width: 4px;
    border-bottom: 0;
    border-top-color: #000;
}

.fx {
    display: flex;
    align-items: center;
    justify-content: space-between;
    width: 84px;
    padding: 0 7px 0 4px;
    background: linear-gradient(#e8f0fb, #b7cfef);
    border: 1px solid #7f9fca;
    border-radius: 11px 0 0 11px;
}

.knob {
    width: 11px;
    height: 11px;
    border-radius: 50%;
    background: radial-gradient(circle at 70% 70%, #e9eff8 40%, #96a9c6);
}

.fx em {
    font-family: "Liberation Serif", serif;
    font-size: 14px;
    font-weight: bold;
    line-height: 16px;
    color: #3b4454;
}

.fx sub {
    font-size: 10px;
    line-height: 0;
}

.formula {
    flex: 1;
    min-width: 0;
    padding-left: 7px;
    background-color: #fff;
}

.expand {
    width: 16px;
    background: linear-gradient(#e8f0fb, #b7cfef);
    border: 1px solid #7f9fca;
}

/* sheet */
.workspace {
    display: flex;
    flex: 1;
    min-height: 0;
    border-top: 1px solid #dce9f9;
    background-color: #fff;
}

.sheet {
    position: relative;
    flex: 1;
    min-width: 0;
    overflow: hidden;
    font-size: 12px;
    color: #000;
}

.sheet table {
    width: 1339px;
    table-layout: fixed;
    border-collapse: separate;
    border-spacing: 0;
}

.c-num {
    width: 26px;
}

.c-a,
.c-x {
    width: 80px;
}

.c-b {
    width: 145px;
}

.c-c {
    width: 128px;
}

.sheet th {
    height: 20px;
    font-weight: normal;
    line-height: 19px;
    color: #263c5e;
    border: 1px solid #9eb6ce;
    border-width: 0 1px 1px 0;
    background-color: #e4ecf7;
}

.sheet thead th {
    height: 20px;
    background: linear-gradient(#f5f8fc, #d5dfee);
}

.sheet th.sel {
    background: #ffd58d;
    border-color: #e0a04a;
}

.sheet thead th.sel {
    background: linear-gradient(#f9d99f, #f1b64b);
}

.sheet .corner {
    background: linear-gradient(135deg, #a9c4e9 68%, #e4ecf7 68%);
}

.sheet td {
    height: 20px;
    padding: 0 2px;
    line-height: 19px;
    white-space: nowrap;
    border: 1px solid #d0d7e5;
    border-width: 0 1px 1px 0;
}

.sheet td.in {
    background-color: #e8ebf5;
}

.sheet .title {
    font-size: 13px;
}

.sheet .num {
    text-align: right;
}

.money {
    display: flex;
    justify-content: space-between;
    padding: 0 3px;
}

.selection {
    position: absolute;
    left: 25px;
    top: 19px;
    width: 355px;
    height: 242px;
    border: 2px solid #000;
}

.selection::after {
    content: "";
    position: absolute;
    right: -4px;
    bottom: -4px;
    width: 6px;
    height: 6px;
    background-color: #000;
    border: 1px solid #fff;
    border-width: 1px 0 0 1px;
}

.chart {
    position: absolute;
    left: 417px;
    top: 69px;
    background-color: #000;
}

.chart text {
    fill: #fff;
    font-size: 12px;
}

.chart .end {
    text-anchor: end;
}

.chart .mid {
    text-anchor: middle;
}

.axes path {
    fill: none;
    stroke: #868686;
}

.blue,
.red {
    fill: none;
    stroke: #4a7ebb;
    stroke-width: 5;
    stroke-linecap: round;
    stroke-linejoin: round;
}

.red {
    stroke: #be4b48;
}

/* scroll bars */
.vscroll {
    display: flex;
    flex-direction: column;
    align-items: center;
    width: 16px;
    background-color: #7d9fd0;
}

.vscroll .split {
    width: 13px;
    height: 6px;
    margin-top: 3px;
    background-color: #fff;
    border: 1px solid #7795c2;
}

.vscroll button,
.hscroll button {
    width: 16px;
    height: 16px;
}

.vscroll button::before,
.hscroll button::before {
    content: "";
    border: 4px solid transparent;
}

.vscroll .up::before {
    margin-bottom: 4px;
    border-bottom-color: #3f5c8c;
}

.vscroll .down::before {
    margin-top: 4px;
    border-top-color: #3f5c8c;
}

.hscroll .left::before {
    margin-right: 4px;
    border-right-color: #3f5c8c;
}

.hscroll .right::before {
    margin-left: 4px;
    border-left-color: #3f5c8c;
}

.track {
    flex: 1;
}

.thumb {
    display: flex;
    align-items: center;
    justify-content: center;
    border: 1px solid #5d7cab;
    border-radius: 1px;
}

.vscroll .thumb {
    width: 14px;
    height: 93%;
    background: linear-gradient(90deg, #f2f6fc, #c4d2e8);
}

.vscroll .thumb i {
    width: 8px;
    height: 8px;
    background: repeating-linear-gradient(#7487a6 0 1px, transparent 1px 2px);
}

.hscroll .thumb {
    width: 86%;
    height: 14px;
    background: linear-gradient(#f4f7fb, #b5c3d8);
}

.hscroll .thumb i {
    width: 8px;
    height: 7px;
    background: repeating-linear-gradient(90deg, #7487a6 0 1px, transparent 1px 2px);
}

/* sheet tabs */
.sheet-bar {
    display: flex;
    height: 17px;
    padding-right: 16px;
    font-size: 12px;
    background: linear-gradient(#86a5d0, #a2bde0);
    border-top: 1px solid #6182b8;
    border-bottom: 1px solid #56749f;
}

.sheet-nav {
    display: flex;
    align-items: center;
    gap: 7px;
    width: 63px;
    padding-left: 5px;
    background-color: #c3d8f3;
    border-right: 1px solid #8aa6cf;
}

.sheet-tabs {
    display: flex;
    flex: 1;
}

.sheet-tabs button {
    position: relative;
    z-index: 0;
    width: 45px;
    padding-left: 2px;
}

.sheet-tabs button::before {
    content: "";
    position: absolute;
    z-index: -1;
    inset: 0 -5px 0 5px;
    background: linear-gradient(#b9d0f0, #dce9fa);
    border-right: 1px solid #7894c0;
    box-shadow: inset -1px 0 0 #fff;
    transform: skewX(-40deg);
}

.sheet-tabs .new {
    width: 32px;
}

.sheet-tabs .act {
    z-index: 1;
    font-weight: bold;
}

.sheet-tabs .act::before {
    inset: 0 -11px 0 0;
    background: #fff;
    border: 0;
    clip-path: polygon(0 0, 100% 0, calc(100% - 12px) 100%, 0 100%);
    transform: none;
}

.sheet-bar .split {
    width: 7px;
    background: linear-gradient(90deg, #fff 3px, #6f8fc0 3px 4px, #fff 4px);
    border: 1px solid #7896c5;
    border-width: 1px 0;
}

.hscroll {
    display: flex;
    flex: 0 1 492px;
    background-color: #7d9fd0;
}

/* status bar */
.status {
    display: flex;
    height: 21px;
    line-height: 20px;
    background: linear-gradient(#dce9fc, #c1d8f9 40%, #a9c9f5 45%, #cbe0fc);
    border-bottom: 1px solid #567db0;
}

.ready {
    width: 56px;
    padding-left: 7px;
    border-right: 1px solid #86a8d8;
}

.sums {
    display: flex;
    gap: 18px;
    margin-left: auto;
    padding-right: 12px;
}

.view {
    display: flex;
    align-items: center;
    gap: 8px;
    padding: 0 5px 0 4px;
    background: linear-gradient(#b0cdf5, #8db4e8 45%, #7ba8e4 50%, #a4c5f2);
    border-left: 1px solid #6d94cb;
}

.view .set {
    height: 18px;
}

.view .set button {
    width: 18px;
    border: 0;
}

.view input {
    appearance: none;
    width: 102px;
    height: 17px;
    margin: 0 -8px;
    background: linear-gradient(#4c6fa8, #4c6fa8) center / 100% 1px no-repeat;
}

.view input::-webkit-slider-thumb {
    appearance: none;
    width: 9px;
    height: 13px;
    background-color: #e4ecf8;
    border: 1px solid #4c5f82;
    border-radius: 1px 1px 5px 5px;
}

/* taskbar */
.taskbar {
    position: relative;
    display: flex;
    height: 30px;
    padding: 0 13px 0 65px;
    color: #fff;
    background: linear-gradient(#7c8085, #45484c 30%, #16181b 50%, #020304 52%, #000);
}

.start {
    position: absolute;
    left: 8px;
    bottom: -7px;
}

.launch-bar {
    display: flex;
    align-items: center;
    gap: 8px;
    width: 97px;
}

.tasks {
    display: flex;
    flex: 0 1 636px;
    gap: 4px;
    min-width: 0;
    padding: 1px 0 2px;
}

.tasks button {
    flex: 1;
    gap: 4px;
    justify-content: flex-start;
    min-width: 0;
    padding-left: 10px;
    white-space: nowrap;
    background: linear-gradient(#808387, #474a4e 45%, #111315 50%, #1f2224);
    border: 1px solid #6d7175;
    border-radius: 2px;
}

.tasks .act {
    background: linear-gradient(#34373a, #17191b 45%, #000 50%, #0b0c0d);
}

.tray {
    display: flex;
    align-items: center;
    gap: 4px;
    margin-left: auto;
    white-space: nowrap;
}

.lang {
    margin-right: 10px;
}

.tray button {
    margin-right: 2px;
}

.tray .gap {
    margin-left: 8px;
}

.tray time {
    margin-left: 4px;
}
```
